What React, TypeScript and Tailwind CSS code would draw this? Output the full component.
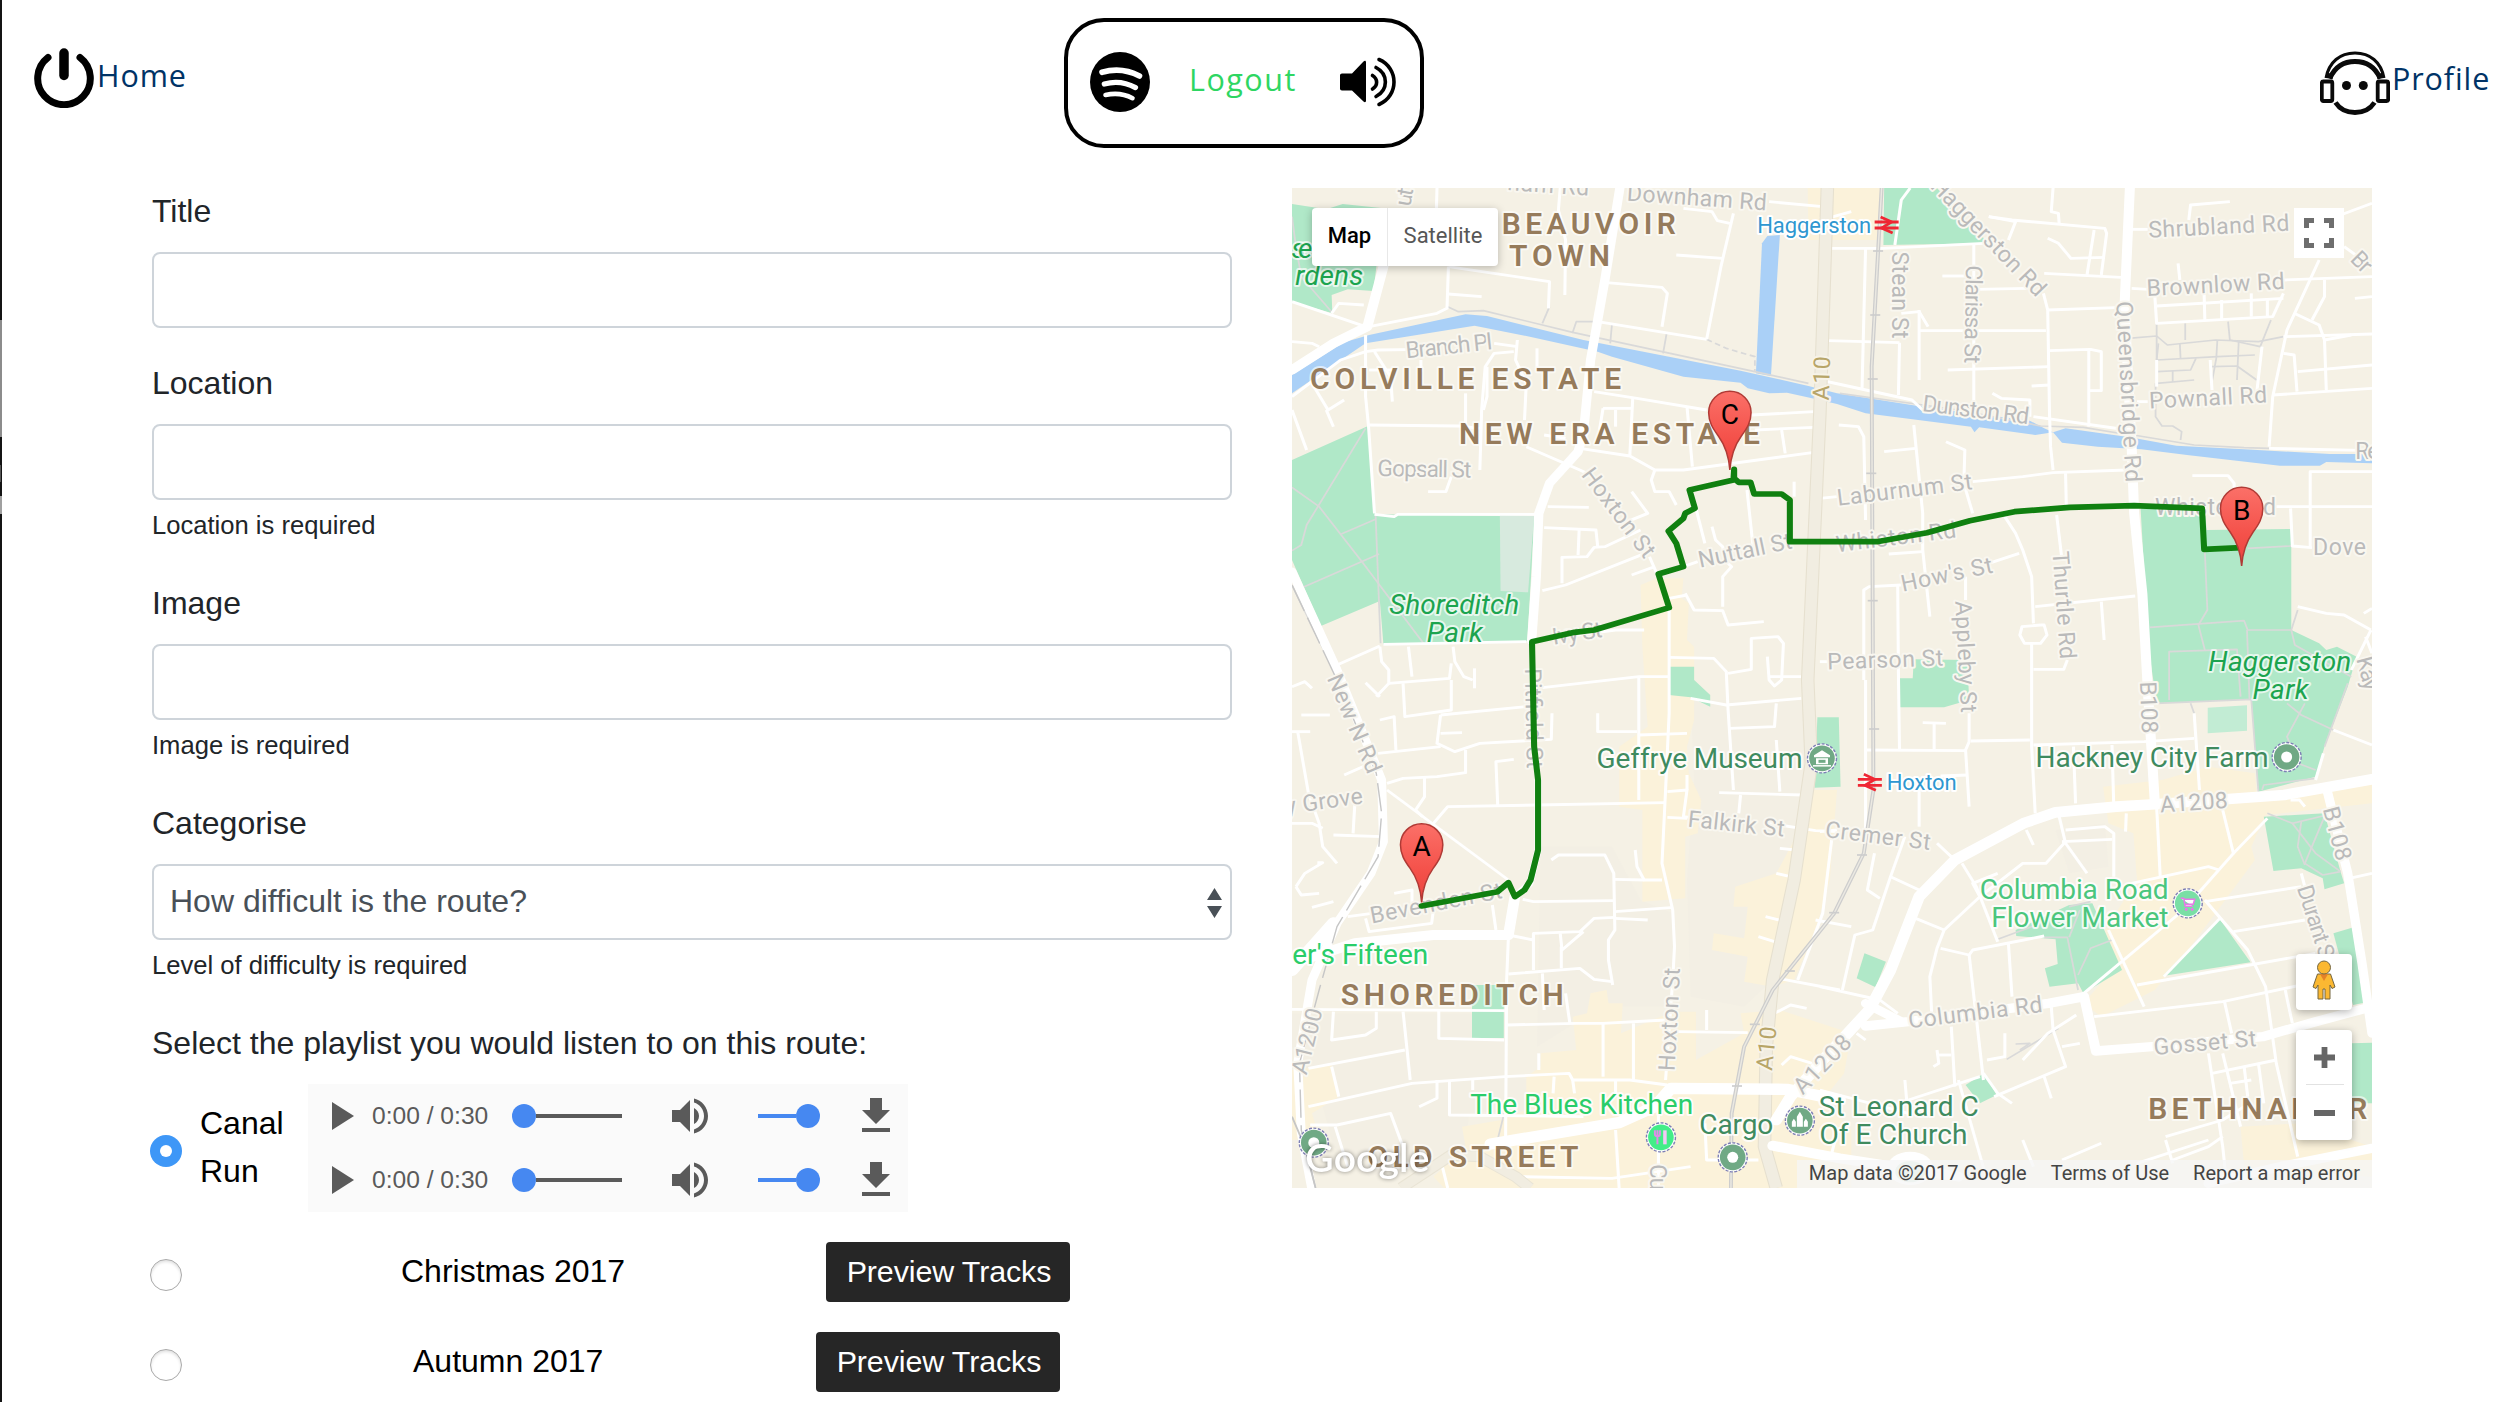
import React from "react";

const HELV = "font-['Liberation_Sans',Arial,sans-serif]";
const WORK = "font-['Open_Sans',sans-serif]";

/* ---------- Header ---------- */

function PowerIcon() {
  return (
    <svg className="h-[60px] w-[60px]" viewBox="0 0 60 60" fill="none" stroke="#000" strokeLinecap="round">
      <path d="M14 9.5A26.3 26.3 0 1 0 46 9.5" strokeWidth="7" />
      <path d="M30 5V27.5" strokeWidth="9.5" />
    </svg>
  );
}

function SpotifyIcon() {
  return (
    <svg className="h-[60px] w-[60px]" viewBox="0 0 60 60">
      <circle cx="30" cy="30" r="30" fill="#000" />
      <g fill="none" stroke="#fff" strokeLinecap="round">
        <path d="M12 20.3C24 16.8 38 18 49.5 24" strokeWidth="5.6" />
        <path d="M14.3 32C25 29 36 30.400 45.500 35.600" strokeWidth="5.200" />
        <path d="M15.500 43C25 40.800 34 41.700 42.500 46.200" strokeWidth="4.600" />
      </g>
    </svg>
  );
}

function SpeakerIcon() {
  return (
    <svg className="h-[50px] w-[57px]" viewBox="0 0 57 50">
      <path d="M2 16.500H12L23.500 4.500C25 3.300 26 3.800 26 5.500V43.500C26 45.200 25 45.700 23.500 44.500L12 33.500H2C.8 33.500 0 32.700 0 31.500V18.500C0 17.300.8 16.500 2 16.500Z" />
      <g fill="none" stroke="#000" strokeWidth="3.600" strokeLinecap="round">
        <path d="M32.500 18.500C38 22 38 28.500 32.500 32" />
        <path d="M36 10.500C48.500 17 48.500 33 36 39.500" />
        <path d="M39 2.500C59 11 59 39 39 47.500" />
      </g>
    </svg>
  );
}

function ProfileIcon() {
  return (
    <svg className="h-[66px] w-[70px]" viewBox="0 0 70 66" fill="none" stroke="#0a0a0a">
      <path d="M6 27C9 11 20 2 35 2S61 11 64 27" strokeWidth="3" />
      <path d="M10 27C15 16 24 10.500 35 10.500S55 16 60 27" strokeWidth="4.800" />
      <path d="M6 24L13 26" strokeWidth="5" />
      <path d="M64 24L57 26" strokeWidth="5" />
      <rect x="1.800" y="30.500" width="10.500" height="19.500" rx="1.500" strokeWidth="3.800" />
      <rect x="57.700" y="30.500" width="10.500" height="19.500" rx="1.500" strokeWidth="3.800" />
      <circle cx="26.500" cy="34.500" r="4.500" fill="#0a0a0a" stroke="none" />
      <circle cx="43.300" cy="34.500" r="4.500" fill="#0a0a0a" stroke="none" />
      <path d="M15.500 51.500C20 58.500 27 61.500 35 61.500S50 58.500 54.500 51.500" strokeWidth="4.800" />
    </svg>
  );
}

function Header() {
  return (
    <header className={`flex h-[188px] items-start text-[30.5px] leading-[40px] ${WORK}`}>
      <a className="flex w-[1064px] pl-[34px] pt-[48px] text-[#003366]">
        <PowerIcon />
        <span className="mt-[7px] ml-[3px] tracking-[0.9px]">Home</span>
      </a>
      <div className="mt-[18px] flex h-[130px] w-[360px] rounded-[40px] border-4 border-black pl-[22px]">
        <div className="mt-[30px]">
          <SpotifyIcon />
        </div>
        <span className="mt-[37px] ml-[39px] w-[108px] tracking-[1.5px] text-[#2ed662]">Logout</span>
        <div className="mt-[35px] ml-[43px]">
          <SpeakerIcon />
        </div>
      </div>
      <a className="flex flex-1 pl-[896px] pt-[51px] text-[#003366]">
        <ProfileIcon />
        <span className="mt-[7px] ml-[2px] tracking-[0.9px]">Profile</span>
      </a>
    </header>
  );
}

/* ---------- Form ---------- */

function Field({ label, help, children }: { label: string; help?: string; children?: React.ReactNode }) {
  return (
    <div className="mb-8">
      <label className="mb-4 block h-12 text-[32px] leading-[46px] text-[#212529]">{label}</label>
      <div className="flex h-[76px] items-center justify-between rounded-[8px] border-2 border-[#ced4da] bg-white pr-[8px] pl-4 text-[32px] text-[#495057]">
        {children}
      </div>
      {help && <small className="mt-[6px] block h-[42px] text-[25.6px] leading-[39px] text-[#212529]">{help}</small>}
    </div>
  );
}

function AudioPlayer() {
  return (
    <div className="flex h-16 w-[600px] items-center bg-[#fafafa] pl-2 text-[24.6px] text-[#5a5a5a]">
      <svg className="h-12 w-12" viewBox="0 0 24 24" fill="#5a5a5a">
        <path d="M8 5v14l11-7z" />
      </svg>
      <span className="ml-2 w-[140px] whitespace-nowrap">0:00 / 0:30</span>
      <div className="flex w-[110px] items-center">
        <span className="h-6 w-6 rounded-full bg-[#4688f1]" />
        <span className="h-1 flex-1 bg-[#5a5a5a]" />
      </div>
      <svg className="ml-11 h-12 w-12" viewBox="0 0 24 24" fill="#5a5a5a">
        <path d="M3 9v6h4l5 5V4L7 9H3zm13.500 3c0-1.770-1.020-3.290-2.500-4.030v8.050c1.480-.730 2.500-2.250 2.500-4.020zM14 3.230v2.060c2.890.860 5 3.540 5 6.710s-2.110 5.850-5 6.710v2.060c4.010-.910 7-4.490 7-8.770s-2.990-7.860-7-8.770z" />
      </svg>
      <div className="ml-11 flex w-[62px] items-center">
        <span className="h-1 flex-1 bg-[#4688f1]" />
        <span className="h-6 w-6 rounded-full bg-[#4688f1]" />
      </div>
      <svg className="ml-8 h-12 w-12" viewBox="0 0 24 24" fill="#5a5a5a">
        <path d="M19 9h-4V3H9v6H5l7 7 7-7zM5 18v2h14v-2H5z" />
      </svg>
    </div>
  );
}

function Radio({ checked }: { checked?: boolean }) {
  return checked ? (
    <span className="flex h-8 w-8 items-center justify-center rounded-full bg-[#3e97f7]">
      <span className="h-3 w-3 rounded-full bg-white" />
    </span>
  ) : (
    <span className="block h-8 w-8 rounded-full border border-[#a9a9a9] bg-white shadow-[inset_0_2px_3px_rgba(0,0,0,0.12)]" />
  );
}

function PreviewButton() {
  return (
    <button className="flex h-[60px] w-[244px] items-center justify-center rounded-[4px] bg-[#262626] pb-[2px] pl-[2px] text-[30.4px] tracking-[-0.1px] text-white">
      Preview Tracks
    </button>
  );
}

function RouteForm() {
  return (
    <form className="w-[1080px]">
      <Field label="Title" />
      <Field label="Location" help="Location is required" />
      <Field label="Image" help="Image is required" />
      <Field label="Categorise" help="Level of difficulty is required">
        <span className="pb-[3px]">How difficult is the route?</span>
        <svg className="mt-[2px] h-[30px] w-[15px]" viewBox="0 0 15 30" fill="#495057">
          <path d="M7.500 0L15 12H0zM0 18H15L7.500 30z" />
        </svg>
      </Field>
      <label className="block h-12 text-[32px] leading-[46px] text-[#212529]">
        Select the playlist you would listen to on this route:
      </label>
      <div className="-ml-[2px] text-[32px] leading-[48px] text-black">
        <div className="mt-4 flex h-32 items-start">
          <div className="mt-[51px] w-[50px]">
            <Radio checked />
          </div>
          <div className="mt-[15px] w-[108px]">
            Canal
            <br />
            Run
          </div>
          <div>
            <AudioPlayer />
            <AudioPlayer />
          </div>
        </div>
        <div className="mt-[30px] flex h-[60px] items-start">
          <div className="mt-[17px] w-[251px]">
            <Radio />
          </div>
          <div className="mt-[5px] w-[425px]">Christmas 2017</div>
          <PreviewButton />
        </div>
        <div className="mt-[30px] flex h-[60px] items-start">
          <div className="mt-[17px] w-[263px]">
            <Radio />
          </div>
          <div className="mt-[5px] w-[403px]">Autumn 2017</div>
          <PreviewButton />
        </div>
      </div>
    </form>
  );
}

/* ---------- Map geometry ---------- */

const LAND_SHADE = [
  "1150,1560 1500,1560 1480,1800 1440,2100 1380,2400 1300,2480 1150,2450 1140,2100 1160,1800",
  "34,2500 630,2500 630,2680 700,2700 690,2790 530,2800 520,2900 250,2990 150,2900 120,2780 34,2600",
  "730,2000 930,2000 1010,2160 1100,2200 1100,2480 900,2480 720,2600",
  "2172,1950 2310,1930 2320,2060 2210,2080",
];

const COMMERCIAL = [
  "1010,1215 1055,1195 1130,1195 1125,1255 1145,1270 1140,1380 1160,1400 1160,1620 1140,1700 1145,1780 1180,1860 1170,1960 1135,1970 1135,2155 1015,2165 1015,1890 950,1880 950,1700 1030,1640 1015,1400",
  "1478,24 1688,24 1680,180 1480,180",
  "1460,1830 1560,1830 1540,2100 1500,2250 1440,2400 1380,2420 1300,2405 1310,2330 1210,2310 1215,2260 1300,2275 1310,2180 1270,2180 1275,2120 1390,2080 1450,1960",
  "870,2440 915,2430 920,2470 960,2470 955,2560 1100,2495 1165,2495 1165,2640 1300,2560 1290,2500 1400,2490 1600,2560 1580,2680 1520,2760 1600,2850 1600,3024 460,3024 430,2990 520,2900 510,2840 620,2820 690,2790 690,2690 730,2660 730,2620 830,2610 820,2510 860,2500",
  "34,2670 145,2655 165,2750 90,2800 110,2870 34,2880",
  "2305,1820 2470,1800 2600,1760 2730,1780 2735,1840 3058,1810 3058,1870 2760,1905 2720,2000 2730,2040 2550,2300 2450,2430 2300,2510 2250,2470 2340,2360 2310,2250 2400,2100 2390,1960 2320,1930",
  "2690,2840 2860,2830 3058,2900 3058,2990 2700,2960",
];

const PARKS = [
  "34,72 130,88 176,72 290,85 262,333 190,328 145,345 147,400 34,365",
  "34,840 247,738 268,1003 616,1008 713,1008 693,1383 290,1393 280,1263 115,1338 34,1140",
  "1692,24 1840,24 1912,110 1985,190 1690,195",
  "2410,985 2590,985 2595,1050 2832,1047 2832,1350 2910,1390 2930,1410 2960,1400 3015,1430 2990,1520 2925,1700 2900,1790 2740,1835 2720,1558 2455,1570 2432,1400",
  "1736,1495 1772,1495 1775,1438 1925,1440 1930,1560 1860,1582 1736,1582",
  "1092,1460 1160,1460 1160,1500 1205,1545 1205,1580 1150,1552 1090,1545",
  "1505,1612 1565,1612 1570,1820 1497,1823",
  "538,2415 627,2415 627,2574 538,2574",
  "1637,2320 1697,2345 1668,2422 1615,2395",
  "1920,2715 1972,2680 2007,2745 1960,2770",
  "2630,2215 2718,2347 2472,2388",
  "2060,2250 2210,2175 2275,2170 2358,2370 2250,2440 2235,2410 2155,2420 2142,2365 2178,2352 2172,2278 2062,2268",
  "2755,1910 2925,1900 2970,2075 2980,2110 2925,2128 2920,2095 2860,2065 2782,2073",
  "2950,2260 3002,2243 3050,2465 3005,2475 2965,2320",
  "3000,2590 3058,2588 3058,2770 2990,2770",
];

const WATER = [
  "34,585 180,487 250,465 520,403 580,408 850,480 1290,572 1480,618 1560,640 1800,680 2100,722 2140,745 2165,757 2200,745 2380,772 2510,797 2700,808 2940,822 3058,822 3058,850 2930,846 2912,857 2800,857 2540,825 2412,808 2290,800 2190,788 2165,757 2115,765 1958,742 1945,757 1935,740 1640,700 1560,672 1490,655 1420,638 1370,640 1310,625 1290,608 1130,590 930,530 890,515 700,470 545,437 240,490 130,570 34,640",
  "1350,190 1365,168 1400,165 1375,588 1333,580",
];

const PATHS = [
  "240,745 75,1035 60,1095 34,1112",
  "34,922 110,980 230,1145 402,1390",
  "172,1062 268,1018",
  "268,1003 282,1390",
  "65,1222 278,1122",
  "34,110 45,200 60,290",
  "60,290 147,398",
  "470,380 500,395 570,392 820,457 830,425 890,425",
  "755,380 735,430",
  "820,457 1330,575 1480,610",
  "930,432 925,490",
  "1083,460 1073,520",
  "1568,640 1900,690 2130,738 2250,742 2380,765",
  "2390,765 2560,795 2700,803 2770,805",
  "2375,475 2455,468 2485,495 2620,480 2740,485 2810,470",
  "2455,430 2455,610 2560,600",
  "2460,490 2455,540 2625,530 2730,525",
  "2535,430 2535,480",
  "2655,425 2660,480 2745,500 2775,420",
  "2520,490 2522,535",
  "2625,480 2622,535 2610,605",
  "2685,480 2680,600",
  "2500,570 2500,605",
  "2455,575 2550,570 2565,535",
  "2610,560 2680,558 2735,600",
  "2452,610 2452,710 2470,738 2500,738 2525,755 2522,780",
  "2590,1115 2597,1290 2572,1335 2590,1410",
  "2436,1342 2700,1322 2710,1350 2832,1350 2850,1290",
  "2708,1350 2715,1560",
  "2832,1350 2842,1395 3000,1490",
  "2490,1560 2490,1415 2680,1408 2690,1550",
  "2455,1570 2720,1558 2740,1835",
  "2710,1105 2832,1098",
  "2990,1510 2925,1700",
  "2870,1570 2820,1670 2850,1750 2900,1770",
  "2820,1570 2860,1605 2950,1650",
  "2550,1570 2560,1600",
  "2750,1830 2755,1815 2900,1795",
  "2210,2180 2270,2165",
  "2012,2277 2130,2230",
  "2140,2272 2205,2272 2235,2430",
  "2210,2272 2240,2190",
  "2235,2385 2270,2305 2330,2280",
  "2765,1900 2835,1930 2900,2020 2970,2075",
  "2835,1930 2920,1908",
  "2860,1925 2850,2000 2870,2055",
  "2925,1910 2870,2050 2920,2085 2970,2075",
  "2035,2638 2180,2545",
  "2060,2592 2100,2590 2072,2610",
  "628,2800 605,2900",
  "34,1215 155,1480",
];

const MINOR = [
  "440,24 438,100",
  "785,24 780,90 800,180 798,345",
  "472,260 755,305 752,385",
  "472,260 468,385 440,400 250,440",
  "472,342 565,350",
  "1270,100 1235,260 1195,478",
  "1110,225 1240,235",
  "1130,85 1210,95 1225,122 1260,130",
  "915,308 1070,322 1085,340 1070,440",
  "890,425 1195,478",
  "1370,65 1520,80",
  "34,485 90,490 110,500",
  "34,365 240,440",
  "145,400 165,370 235,375",
  "34,650 170,540 240,515 275,510 400,508",
  "240,465 240,650 248,735 265,1000",
  "265,515 310,590 315,665",
  "34,690 75,810",
  "90,610 135,690 180,660",
  "130,690 150,740",
  "248,735 500,738 560,745",
  "250,570 320,570",
  "560,870 565,690 575,560 600,520 655,515",
  "570,690 580,650 580,560",
  "665,480 660,540 690,610 685,720",
  "600,490 665,500",
  "720,505 720,560",
  "880,635 1000,655 1195,690",
  "520,640 520,730",
  "395,540 395,575",
  "740,765 800,775",
  "1140,680 1155,860",
  "905,685 895,750",
  "905,685 985,685",
  "940,690 940,740",
  "988,655 980,825",
  "840,805 980,828 1050,870 1130,870 1490,818",
  "1050,870 1040,900 1050,935 1090,935 1110,975",
  "690,800 840,870 880,890",
  "1320,705 1495,695",
  "1330,750 1495,742",
  "1405,750 1415,820",
  "265,1003 320,1010 330,1003 715,1003",
  "415,935 465,935 480,890",
  "750,980 865,982",
  "740,1043 885,1050 890,1100",
  "838,1050 835,1125",
  "735,1232 800,1215 1035,1115",
  "790,1210 790,1132 860,1130 880,1102 910,1100 1010,1050",
  "985,935 1030,1000 960,1030",
  "1035,1130 1055,1180",
  "985,1185 1050,1160",
  "1165,985 1190,1090",
  "1210,1040 1220,1080 1240,1100 1245,1140 1265,1160 1240,1190 1240,1280",
  "1308,930 1325,1100",
  "1130,1160 1170,1145",
  "1090,1255 1140,1245",
  "1135,1240 1160,1290 1240,1292 1255,1335 1355,1325",
  "1060,1195 1090,1283 1090,1600 1080,1830 1070,2050 1100,2190 1105,2300 1100,2400 1080,2700",
  "1090,1432 1215,1435 1250,1475 1255,1590 1270,1830",
  "1255,1480 1320,1468 1320,1375 1395,1370 1410,1390 1405,1500 1385,1518 1370,1500 1365,1430",
  "1370,1490 1460,1490",
  "1440,905 1440,950",
  "706,1383 940,1350 1020,1350",
  "735,1523 1005,1490 1090,1490",
  "1005,1490 1005,1860",
  "290,1393 690,1385",
  "160,1455 280,1398",
  "34,1520 70,1505 90,1525",
  "280,1400 285,1445 305,1470 305,1510 270,1550",
  "360,1400 370,1490",
  "485,1400 490,1445 515,1490 540,1500",
  "240,1508 280,1550",
  "305,1510 475,1495 480,1450",
  "545,1465 545,1525",
  "345,1510 350,1610 480,1590 480,1500",
  "280,1620 320,1610 325,1710",
  "450,1605 690,1580",
  "450,1605 440,1690 490,1715 560,1690 760,1678 762,1600",
  "275,1720 450,1700",
  "450,1660 510,1658",
  "60,1605 140,1605",
  "34,1655 85,1655",
  "50,1655 80,1840 110,1930 120,2000 160,2050",
  "180,1785 275,1740",
  "300,1810 345,1795 440,1790 520,1778 520,1710",
  "300,1830 640,2100",
  "405,1790 405,1850 380,1890 400,1910",
  "430,1930 470,1880 1080,1868",
  "610,1875 605,1745 655,1738",
  "205,1960 210,1870",
  "150,1965 285,1970",
  "34,1930 90,1930 120,1945",
  "45,2120 70,2080 120,2048 105,2048",
  "90,2182 150,2165",
  "45,2120 60,2145 110,2140",
  "190,2210 400,2180",
  "240,2215 250,2255 425,2230 430,2190",
  "320,2140 370,2130 370,2170",
  "640,2270 635,2400 632,2900",
  "595,2175 605,2250",
  "680,2158 710,2165 935,2162",
  "760,2040 780,2025 910,2025 935,2080 938,2250 920,2280 920,2340 932,2415",
  "995,2010 1000,2060 1020,2100 1070,2100",
  "938,2098 1020,2100",
  "938,2195 1095,2183",
  "938,2215 1030,2220",
  "640,2265 710,2280 710,2260 840,2255 880,2215 938,2212",
  "710,2270 710,2370",
  "785,2260 790,2310 850,2255",
  "788,2300 788,2365",
  "640,2382 840,2365 880,2398 930,2405",
  "735,2380 740,2490",
  "800,2440 812,2530",
  "34,2488 630,2492",
  "445,2492 445,2575 628,2580",
  "150,2495 145,2580 240,2565 270,2545 270,2495",
  "345,2495 365,2700",
  "80,2665 350,2610",
  "145,2660 165,2750",
  "80,2780 370,2710 630,2690 810,2680 820,2700 980,2700 1085,2715",
  "475,2700 475,2805 850,2810",
  "440,2700 440,2755 390,2780",
  "540,2700 540,2730",
  "768,2690 765,2740",
  "820,2700 825,2740",
  "85,2835 160,2835 310,2800 350,2915",
  "155,2840 190,2960",
  "635,2535 830,2530 905,2530 1080,2520",
  "905,2530 905,2690",
  "990,2530 990,2700",
  "1110,2555 1310,2558",
  "1195,2490 1195,2550",
  "725,2620 725,2670",
  "940,2700 940,2740",
  "940,2850 950,3024",
  "1060,2780 1060,3024",
  "1190,2830 1195,2940 1340,2940",
  "455,2960 470,3024",
  "675,2990 930,2995 1150,2960",
  "890,1600 890,1655 1000,1655",
  "1005,1665 1140,1660",
  "1085,1835 1140,1830 1130,1910 1170,1915",
  "1140,1785 1140,1830",
  "1085,1912 1140,1915",
  "1150,1555 1250,1575 1460,1555",
  "1390,1570 1385,1640 1260,1645",
  "1390,1680 1400,1835",
  "1230,1838 1465,1845",
  "1290,1845 1285,1900",
  "1370,1930 1500,1952 1560,1955",
  "1400,2005 1445,2010",
  "1390,2080 1430,2090",
  "1360,2210 1405,2222",
  "1340,2270 1385,2285",
  "1545,1980 1520,2200 1450,2400",
  "1395,2395 1568,2430",
  "1385,2500 1430,2475 1475,2485",
  "1405,2655 1430,2630 1490,2650",
  "1500,2220 1600,2240",
  "1510,205 1690,205 1970,190",
  "1600,95 1550,110 1512,115",
  "1640,205 1630,630",
  "1535,482 1735,488",
  "1765,24 1740,60 1722,195",
  "1735,488 1732,645",
  "1512,600 1770,660 1800,690",
  "1790,390 1790,600",
  "1740,400 1790,395 1815,440",
  "1790,452 2145,452",
  "1943,195 1943,665",
  "1855,288 1930,288",
  "1950,328 2090,325",
  "1985,110 2050,120 2310,145 2315,160 2300,285",
  "1985,110 2060,125 2040,180",
  "2165,24 2160,95 2180,100 2182,130",
  "2150,175 2180,190 2215,235 2310,232",
  "2280,150 2260,285",
  "2140,280 2355,292",
  "2138,340 2150,390 2155,700 2158,800 2165,870",
  "2150,390 2340,383",
  "2155,512 2270,508 2300,515 2300,632 2265,632",
  "2265,510 2265,740",
  "1870,570 2155,560",
  "2105,618 2155,615",
  "1995,640 2020,655 2100,660 2100,710",
  "2110,710 2375,750",
  "2385,148 2430,148",
  "2545,120 2550,75 2660,65",
  "2515,250 2520,300",
  "2385,325 2430,328",
  "2450,350 2455,430 2780,410 2810,340",
  "2455,378 2810,355",
  "2588,345 2590,420",
  "2637,360 2637,420",
  "2720,340 2720,410",
  "2765,360 2765,410",
  "2605,540 2610,630",
  "2455,540 2455,620",
  "2750,500 2735,640",
  "2970,105 3058,70",
  "2910,240 2820,450 2780,650 2770,800",
  "2980,200 3058,260",
  "2810,300 3058,290",
  "2925,300 2925,350 2890,420",
  "2840,400 2910,435 2925,480 2930,630",
  "2810,470 3058,462",
  "2925,480 3000,465",
  "2810,520 2840,525 2848,635",
  "2850,575 3058,555",
  "2780,645 3058,625",
  "2400,665 2430,665",
  "2770,805 3058,812",
  "3010,355 3058,350",
  "1512,955 1560,950",
  "1940,905 2080,890 2165,878 2370,870",
  "2200,880 2202,975",
  "1565,735 1620,740 1635,770 1640,1020",
  "1692,815 1780,805",
  "1775,735 1800,1000 1800,1110 1820,1310",
  "1865,785 1918,810 1915,910 1940,1000",
  "1705,1122 1800,1115",
  "2030,1010 2060,1060 2080,1110 2105,1190 2110,1330",
  "1985,1150 2070,1120",
  "1635,1500 1635,1230 1650,1220 1740,1215",
  "1730,1215 1732,1480 1735,1710",
  "1920,1190 1920,1260",
  "2115,1280 2395,1248",
  "2300,1265 2308,1380",
  "2130,1335 2078,1340 2072,1365 2085,1390 2130,1390 2148,1365 2140,1335 2130,1335",
  "2105,1390 2105,1700 2115,1900",
  "2175,1005 2190,1140",
  "2110,1468 2195,1468 2205,1440",
  "2555,887 2655,887 2672,910 2672,960",
  "2790,980 3058,980",
  "2885,1100 2885,875 3058,875",
  "2830,985 2835,1098 2890,1103",
  "2850,1280 2930,1300 2980,1305 3055,1350",
  "3055,1350 3000,1470",
  "3035,1300 3058,1285",
  "3040,1370 3058,1420",
  "1512,1445 1535,1445",
  "1640,1500 1640,1960",
  "1640,1710 1920,1712",
  "1930,1600 1930,1685 1920,1710 1930,1880",
  "1935,1683 2100,1680",
  "1800,1628 1865,1630",
  "1832,1630 1832,1710",
  "1850,1788 1925,1785",
  "1790,1830 1790,1940",
  "2110,1695 2420,1685 2560,1675",
  "2222,1700 2228,1870",
  "2330,1695 2335,1880",
  "2560,1600 2575,1830",
  "2870,1880 2855,1860 2830,1860",
  "2922,1720 2900,1800",
  "2950,1650 3058,1695",
  "1512,1955 1560,1950",
  "1750,1970 1710,2090 1660,2250 1610,2265 1575,2430",
  "1710,2090 1790,2130",
  "1665,2020 1645,2130 1680,2155",
  "1840,1990 1890,2040",
  "1910,2050 1950,2120 2010,2285",
  "2090,1950 2110,1995",
  "2180,1900 2200,1990 2260,2080",
  "2200,1950 2310,1940 2335,1960 2335,2090",
  "2190,1985 2330,1978",
  "2200,1985 2145,2050 2080,2050 1960,2150 1940,2110 2010,2080",
  "1960,2150 1860,2250 1840,2305 1820,2390 1825,2500",
  "1780,2215 1860,2250",
  "1850,2305 1930,2325 1940,2310 2140,2268",
  "1930,2325 1970,2700",
  "2040,2290 2050,2450",
  "2455,1880 2465,2090",
  "2370,1900 2368,1955",
  "2640,1890 2670,2020 2765,1915",
  "2385,2110 2600,2060 2630,2070",
  "2670,2020 2530,2190 2240,2450",
  "2320,2250 2420,2480",
  "2590,2160 2710,2310 2760,2420 2790,2650 2850,2930",
  "2590,2165 2860,2120",
  "2670,2255 2870,2220",
  "2860,2080 2870,2120",
  "2632,2215 2475,2390",
  "2400,2415 2900,2320",
  "2280,2510 2640,2465 2860,2415",
  "2645,2465 2665,2560",
  "2815,2430 2835,2530",
  "1512,2420 1680,2460 1730,2500",
  "1615,2560 1640,2580",
  "1880,2540 1890,2720",
  "2160,2480 2165,2550 2200,2660 2000,2750",
  "2030,2560 2030,2630 1980,2640",
  "1840,2610 1845,2650 1830,2660",
  "1840,2625 1880,2625",
  "2190,2600 2240,2590",
  "2140,2690 2160,2755",
  "2230,2505 2150,2560 2080,2640",
  "1512,2730 1760,2800",
  "1970,2680 2010,2740 2050,2770",
  "1760,2760 1960,2690",
  "1750,2700 1755,2760",
  "1900,2700 1980,3000",
  "2300,2890 2190,2940",
  "2080,2880 2110,2960",
  "2480,2880 2500,2950",
  "2480,2870 2640,2820 2700,2780",
  "2500,2940 2600,2900 2640,2870",
  "2600,2620 2640,2900 2650,3000",
  "2610,2680 2790,2640",
  "2640,2620 2690,2840",
  "2660,2710 2720,2700",
  "2700,2660 2710,2750",
  "2740,2650 2755,2770",
  "2400,2950 2600,2880",
  "1545,2920 1560,2860",
  "2995,2095 3058,2080",
];

const MAJOR: { d: string; w: number }[] = [
  { d: "952,24 910,300 870,540 850,760 835,815 755,910 725,1000 718,1190 705,1383", w: 26 },
  { d: "318,100 290,260 245,440 150,490 34,570", w: 28 },
  { d: "34,1175 160,1470 285,1800 290,1985 255,2080 160,2230 90,2400 50,2650 60,2860 90,3030", w: 25 },
  { d: "150,2230 34,2370", w: 36 },
  { d: "2380,24 2365,380 2385,800 2392,1000 2415,1240 2432,1560 2450,1870", w: 28 },
  { d: "3058,1798 2812,1845 2462,1872 2342,1880 2172,1897 2082,1930 1890,2040 1790,2150 1710,2370 1650,2490 1512,2650 1430,2750 1390,2820", w: 32 },
  { d: "590,2892 950,2828 1050,2780 1095,2725 1420,2728 1568,2760", w: 34 },
  { d: "1380,2897 1568,2935 1900,2990", w: 30 },
  { d: "658,2150 640,2265 430,2265 210,2290 34,2350", w: 30 },
  { d: "1640,2538 1760,2525 2152,2470 2252,2450 2285,2613 2442,2600 2752,2570 2900,2525 3058,2480", w: 28 },
  { d: "1640,2470 1740,2525", w: 26 },
  { d: "2932,1830 2990,2080 3030,2350 3058,2560", w: 26 },
  { d: "3058,2905 2800,2960 2600,3010", w: 28 },
  { d: "723,1800 723,2010 700,2110 658,2150", w: 20 },
];

const ROUTE =
  "397,2178 610,2135 640,2108 658,2150 685,2130 702,2100 723,2010 723,1800 712,1700 706,1385 825,1357 880,1350 1090,1283 1060,1182 1130,1160 1110,1090 1088,1053 1130,1015 1135,1000 1162,985 1147,930 1270,900 1272,868 1272,895 1285,907 1318,907 1328,942 1405,942 1428,960 1428,1085 1672,1085 1812,1058 1932,1022 2057,995 2212,982 2392,977 2582,985 2588,1108 2692,1103";

const RAIL = "1685,24 1657,560 1662,1830 1635,2020 1552,2200 1380,2430 1300,2600 1265,2800 1263,3024";
const TIES = [
  [1675, 213],
  [1667, 405],
  [1660, 597],
  [1656, 880],
  [1660, 1262],
  [1664, 1647],
  [1630, 2025],
  [1552, 2198],
  [1428, 2373],
  [1330, 2533],
  [1280, 2718],
];

/* ---------- Map labels ---------- */

type Kind = "area" | "road" | "highway" | "poi" | "food" | "shop" | "park" | "station";
type Label = [text: string, x: number, y: number, width: number, rotate: number, kind: Kind];

const LABELS: Label[] = [
  ["ham Rd", 752, 14, 82, 4, "road"],
  ["Downham Rd", 1168, 52, 140, 4, "road"],
  ["ut", 347, 50, 18, -80, "road"],
  ["Branch Pl", 473, 497, 87, -6, "road"],
  ["Gopsall St", 405, 866, 94, 1, "road"],
  ["Hoxton St", 950, 997, 106, 53, "road"],
  ["Nuttall St", 1302, 1110, 95, -12, "road"],
  ["Ivy St", 832, 1358, 50, -9, "road"],
  ["Pitfield St", 712, 1615, 100, 89, "road"],
  ["New N Rd", 210, 1630, 105, 67, "road"],
  ["y Grove", 123, 1862, 78, -8, "road"],
  ["Bevenden St", 437, 2168, 134, -11, "road"],
  ["A1200", 75, 2583, 67, -76, "road"],
  ["Hoxton St", 1090, 2518, 103, -87, "road"],
  ["A10", 1516, 595, 44, -88, "highway"],
  ["A10", 1362, 2605, 44, -84, "highway"],
  ["Falkirk St", 1278, 1930, 97, 6, "road"],
  ["Cremer St", 1675, 1966, 106, 7, "road"],
  ["A1208", 1518, 2652, 72, -46, "road"],
  ["Cu", 1060, 2992, 26, 90, "road"],
  ["Stean St", 1737, 345, 87, 90, "road"],
  ["Clarissa St", 1942, 403, 98, 91, "road"],
  ["Haggerston Rd", 1985, 170, 154, 46, "road"],
  ["Queensbridge Rd", 2378, 635, 181, 87, "road"],
  ["Shrubland Rd", 2629, 138, 141, -3, "road"],
  ["Brownlow Rd", 2620, 313, 138, -3, "road"],
  ["Pownall Rd", 2599, 652, 118, -3, "road"],
  ["Br", 3030, 245, 20, 45, "road"],
  ["Re", 3045, 812, 24, 0, "road"],
  ["Dunston Rd", 1949, 688, 107, 7, "road"],
  ["Laburnum St", 1749, 928, 136, -7, "road"],
  ["Whiston Rd", 1725, 1070, 121, -7, "road"],
  ["Whiston Rd", 2620, 980, 121, 0, "road"],
  ["How's St", 1867, 1182, 93, -12, "road"],
  ["Thurtle Rd", 2197, 1275, 108, 86, "road"],
  ["Appleby St", 1922, 1430, 112, 87, "road"],
  ["Pearson St", 1695, 1438, 116, -2, "road"],
  ["Dove", 2967, 1100, 53, 0, "road"],
  ["B108", 2434, 1582, 52, 88, "road"],
  ["Kay", 3048, 1480, 34, 75, "road"],
  ["A1208", 2559, 1866, 68, -4, "road"],
  ["B108", 2962, 1960, 55, 75, "road"],
  ["Durant S", 2902, 2225, 76, 72, "road"],
  ["Columbia Rd", 1947, 2496, 135, -7, "road"],
  ["Gosset St", 2590, 2587, 103, -5, "road"],
  ["BEAUVOIR", 865, 131, 174, 0, "area"],
  ["TOWN", 783, 226, 101, 0, "area"],
  ["COLVILLE ESTATE", 520, 596, 311, 0, "area"],
  ["NEW ERA ESTATE", 923, 760, 301, 0, "area"],
  ["SHOREDITCH", 483, 2443, 223, 0, "area"],
  ["OLD STREET", 541, 2930, 211, 0, "area"],
  ["BETHNAL GR", 2738, 2785, 219, 0, "area"],
  ["Haggerston", 1496, 135, 114, 0, "station"],
  ["Hoxton", 1797, 1807, 70, 0, "station"],
  ["se", 62, 203, 21, 0, "park"],
  ["rdens", 138, 286, 68, 0, "park"],
  ["Shoreditch", 488, 1272, 130, 0, "park"],
  ["Park", 490, 1357, 56, 0, "park"],
  ["Haggerston", 2800, 1443, 143, 0, "park"],
  ["Park", 2802, 1528, 56, 0, "park"],
  ["Geffrye Museum", 1175, 1735, 206, 0, "poi"],
  ["Hackney City Farm", 2442, 1732, 233, 0, "poi"],
  ["Columbia Road", 2224, 2128, 189, 0, "shop"],
  ["Flower Market", 2240, 2212, 177, 0, "shop"],
  ["er's Fifteen", 225, 2323, 136, 0, "food"],
  ["The Blues Kitchen", 845, 2772, 223, 0, "food"],
  ["Cargo", 1278, 2833, 74, 0, "poi"],
  ["St Leonard C", 1733, 2778, 160, 0, "poi"],
  ["Of E Church", 1718, 2861, 148, 0, "poi"],
];

const KIND_CLASS: Record<Kind, string> = {
  area: "fill-[#967b5b] text-[30px] font-semibold stroke-white/60",
  road: "fill-[#bababa] text-[23px] stroke-[#f9f7f0]",
  highway: "fill-[#b7a568] text-[23px] stroke-[#f7f3e8]",
  poi: "fill-[#3f8b5f] text-[28px] stroke-white/80",
  food: "fill-[#2acd6a] text-[28px] stroke-white/80",
  shop: "fill-[#4bc67d] text-[28px] stroke-white/80",
  park: "fill-[#1ca44f] text-[28px] italic stroke-white/70",
  station: "fill-[#2f97d0] text-[22px] stroke-white",
};

const px = (x: number) => (x - 34) / 2.8;
const py = (y: number) => (y - 24) / 3;

function MapLabels() {
  return (
    <g className="font-[Roboto,sans-serif]" strokeWidth="4" strokeLinejoin="round" textAnchor="middle">
      {LABELS.map(([text, x, y, width, rotate, kind], i) => (
        <text
          key={i}
          className={`${KIND_CLASS[kind]} [paint-order:stroke]`}
          transform={`translate(${px(x)} ${py(y)}) rotate(${rotate})`}
          dy="0.355em"
          textLength={width}
        >
          {text}
        </text>
      ))}
    </g>
  );
}

function Badge({ x, y, fill, children }: { x: number; y: number; fill: string; children: React.ReactNode }) {
  return (
    <g transform={`translate(${px(x)} ${py(y)})`}>
      <circle r="14.500" fill="#fff" stroke="#7d7fb5" strokeWidth="1.400" strokeDasharray="3 1.500" />
      <circle r="12.800" fill={fill} />
      {children}
    </g>
  );
}

function RailSign({ x, y }: { x: number; y: number }) {
  return (
    <g transform={`translate(${px(x)} ${py(y)})`} fill="none" stroke="#ef2733" strokeWidth="2.800">
      <path d="M-12 -3H12M-12 3H12" />
      <path d="M-6 -8L5 -3L-5 3L6 8" />
    </g>
  );
}

function Marker({ x, y, letter }: { x: number; y: number; letter: string }) {
  return (
    <g transform={`translate(${px(x) - 22} ${py(y) - 80})`}>
      <path
        d="M22 80C21 66 17 55 10.500 46C5 38.500 .8 32 .8 22.500A21.200 21.200 0 0 1 43.200 22.500C43.200 32 39 38.500 33.500 46C27 55 23 66 22 80Z"
        fill="url(#pin)"
        stroke="#b03a35"
        strokeWidth="1.500"
      />
      <text x="22" y="34" textAnchor="middle" className="fill-black font-[Roboto,sans-serif] text-[28px]">
        {letter}
      </text>
    </g>
  );
}

function MapCanvas() {
  return (
    <>
      <svg className="absolute inset-0 h-full w-full" viewBox="34 24 3024 3000" preserveAspectRatio="none" fill="none" strokeLinejoin="round">
        <rect x="34" y="24" width="3024" height="3000" fill="#f5f1e5" />
        {LAND_SHADE.map((p) => (
          <polygon key={p} points={p} fill="#f3efe4" />
        ))}
        {COMMERCIAL.map((p) => (
          <polygon key={p} points={p} fill="#fbf2da" />
        ))}
        {PARKS.map((p) => (
          <polygon key={p} points={p} fill="#b0e8c8" />
        ))}
        <polygon points="616,1005 712,1008 695,1237 618,1233" fill="#d7eade" />
        <polygon points="2598,1583 2708,1576 2708,1652 2598,1660" fill="#c2ecd4" />
        {WATER.map((p) => (
          <polygon key={p} points={p} fill="#aad0f7" />
        ))}
        <g stroke="#d9d9d9" strokeWidth="5">
          {PATHS.map((p) => (
            <polyline key={p} points={p} />
          ))}
          <polyline points="1195,478 1250,505 1330,530 1330,575" strokeDasharray="16 10" />
        </g>
        <g stroke="#fff" strokeWidth="8.500">
          {MINOR.map((p) => (
            <polyline key={p} points={p} />
          ))}
        </g>
        <polyline points="340,3024 480,2925 560,2930 660,2990 700,3024" stroke="#e9e4d5" strokeWidth="34" />
        <polyline points="340,3024 480,2925 560,2930 660,2990 700,3024" stroke="#f1ede1" strokeWidth="28" />
        <polyline points="1533,24 1512,700 1478,1500 1488,1750 1440,2100 1380,2400 1362,2600 1357,2900 1390,3024" stroke="#e6e0cf" strokeWidth="38" />
        <polyline points="1533,24 1512,700 1478,1500 1488,1750 1440,2100 1380,2400 1362,2600 1357,2900 1390,3024" stroke="#f1ede1" strokeWidth="32" />
        {MAJOR.map((r) => (
          <polyline key={r.d} points={r.d} stroke="#fff" strokeWidth={r.w} strokeLinecap="round" />
        ))}
        <ellipse cx="1765" cy="2965" rx="65" ry="50" fill="#fff" />
        <ellipse cx="1765" cy="2975" rx="42" ry="32" fill="#d5ecdf" />
        <polyline points={RAIL} stroke="#cdcdcd" strokeWidth="11" />
        <polyline points={RAIL} stroke="#ebe9e2" strokeWidth="4" />
        {TIES.map(([x, y]) => (
          <path key={y} d={`M${x - 14} ${y}h28`} stroke="#cdcdcd" strokeWidth="5" />
        ))}
        <polyline
          points="34,1215 160,1500 270,1780 285,1900 275,2030 160,2240 110,2430 55,2650 60,2850 100,3024"
          stroke="#c6c6c6"
          strokeWidth="4"
          strokeDasharray="85 22"
        />
        <polyline points="34,2810 70,2900 100,3024" stroke="#c6c6c6" strokeWidth="5" />
      </svg>
      <svg className="absolute inset-0 h-full w-full" viewBox="0 0 1080 1000">
        <defs>
          <linearGradient id="pin" x1="0" y1="0" x2="0" y2="1">
            <stop offset="0" stopColor="#fb7068" />
            <stop offset="0.6" stopColor="#f4514a" />
            <stop offset="1" stopColor="#e9433e" />
          </linearGradient>
        </defs>
        <MapLabels />
        <RailSign x={1699} y={135} />
        <RailSign x={1652} y={1807} />
        <Badge x={1518} y={1735} fill="#70a985">
          <path d="M0 -8L8 -3V-1H-8V-3ZM-6 0H6V6H-6Z" fill="#fff" />
          <path d="M-3.500 1.500H3.500V4.500H-3.500Z" fill="#70a985" />
          <path d="M-9 7.500H9" stroke="#fff" strokeWidth="1.500" />
        </Badge>
        <Badge x={2819} y={1731} fill="#70a985">
          <circle r="5.500" fill="#fff" />
        </Badge>
        <Badge x={2542} y={2170} fill="#7adfa5">
          <path d="M-7 -5H-4L-2.500 3H5M-3.500 -4H7L5.500 1H-3" fill="#fff" stroke="#e879e8" strokeWidth="1.500" />
          <circle cx="-1.500" cy="6" r="1.500" fill="#e879e8" />
          <circle cx="4.500" cy="6" r="1.500" fill="#e879e8" />
        </Badge>
        <Badge x={1067} y={2872} fill="#43ed88">
          <path d="M-6 -7V-3Q-6 -1 -3.500 -1Q-1 -1 -1 -3V-7M-3.500 -7V7" fill="none" stroke="#e08be8" strokeWidth="2" />
          <path d="M4 -7V7" stroke="#f3c8f7" strokeWidth="3.500" />
        </Badge>
        <Badge x={1268} y={2932} fill="#70a985">
          <circle r="5.500" fill="#fff" />
        </Badge>
        <Badge x={1456} y={2822} fill="#70a985">
          <path d="M-8 6V1L-6 -2L-4 1V6ZM-3 6V-4L0 -9L3 -4V6ZM4 6V1L6 -2L8 1V6Z" fill="#fff" />
        </Badge>
        <Badge x={95} y={2888} fill="#70a985">
          <circle r="5.500" fill="#fff" />
        </Badge>
        <text
          x={px(245)}
          y={py(2976)}
          textAnchor="middle"
          textLength="124"
          className="fill-white font-[Lato,sans-serif] text-[39px] font-semibold [filter:drop-shadow(0_0_2px_rgba(0,0,0,0.45))]"
        >
          Google
        </text>
      </svg>
      <svg className="absolute inset-0 h-full w-full" viewBox="34 24 3024 3000" preserveAspectRatio="none" fill="none">
        <polyline points={ROUTE} stroke="#108010" strokeWidth="17" strokeLinejoin="round" strokeLinecap="round" />
      </svg>
      <svg className="absolute inset-0 h-full w-full" viewBox="0 0 1080 1000">
        <Marker x={397} y={2167} letter="A" />
        <Marker x={2693} y={1158} letter="B" />
        <Marker x={1260} y={870} letter="C" />
      </svg>
    </>
  );
}

function MapControls() {
  return (
    <>
      <div className="absolute top-5 left-5 flex h-[58px] rounded-[4px] bg-white text-[22px] leading-[56px] text-[#565656] shadow-[0_2px_8px_rgba(0,0,0,0.25)]">
        <span className="w-[76px] border-r border-[#e8e8e8] text-center font-medium text-black">Map</span>
        <span className="w-[110px] text-center">Satellite</span>
      </div>
      <div className="absolute top-5 left-[1002px] flex h-[50px] w-[50px] items-center justify-center bg-white">
        <svg className="h-[30px] w-[30px]" viewBox="0 0 30 30" fill="none" stroke="#6e6e6e" strokeWidth="5">
          <path d="M10 2.500H2.500V10M20 2.500H27.500V10M10 27.500H2.500V20M20 27.500H27.500V20" />
        </svg>
      </div>
      <div className="absolute top-[766px] left-[1004px] flex h-14 w-14 items-center justify-center rounded-[4px] bg-white shadow-[0_2px_8px_rgba(0,0,0,0.3)]">
        <svg className="-mt-1 h-[40px] w-[24px]" viewBox="0 0 24 40" fill="#fbb832" stroke="#74663f" strokeWidth="1">
          <path d="M5.500 14L1 27L4 28.500L6 25V39H11V29H13V39H18V25L20 28.500L23 27L18.500 14Z" />
          <path d="M8 14L12 21L16 14Z" fill="#e58127" stroke="none" />
          <circle cx="12" cy="7.500" r="6.500" />
        </svg>
      </div>
      <div className="absolute top-[842px] left-[1004px] flex h-[110px] w-14 flex-col items-center rounded-[4px] bg-white pl-[1px] shadow-[0_2px_8px_rgba(0,0,0,0.3)]">
        <svg className="mt-[17px] h-[21px] w-[21px]" viewBox="0 0 20 20" stroke="#666" strokeWidth="5.500">
          <path d="M0 10H20M10 0V20" />
        </svg>
        <span className="mt-[16px] h-px w-[38px] bg-[#e2e2e2]" />
        <span className="mt-[25px] h-[6px] w-[21px] bg-[#666]" />
      </div>
      <div className="absolute right-0 bottom-0 flex h-7 gap-6 bg-[#f5f5f5]/75 pr-[12px] pl-3 text-[20px] leading-[26px] whitespace-nowrap text-[#444]">
        <span>Map data ©2017 Google</span>
        <span>Terms of Use</span>
        <span>Report a map error</span>
      </div>
    </>
  );
}

export default function App() {
  return (
    <div className={`flex h-[1402px] w-[2518px] overflow-hidden bg-white ${HELV}`}>
      <div className="flex w-[2px] shrink-0 flex-col bg-[#141414]">
        <span className="mt-[320px] h-[117px] bg-[#8c8c8c]" />
        <span className="mt-[28px] h-[17px] w-px bg-[#555]" />
        <span className="mt-[14px] h-[18px] bg-[#a0a0a0]" />
      </div>
      <div className="w-[2516px] shrink-0">
        <div className="-ml-[2px] w-[2518px] pl-0">
          <div className="ml-[2px] w-[2516px]">
            <div className="-ml-[2px]">
              <Header />
            </div>
          </div>
        </div>
        <main className="flex gap-[60px] pl-[150px]">
          <RouteForm />
          <section className="relative h-[1000px] w-[1080px] shrink-0 overflow-hidden font-[Roboto,sans-serif]">
            <MapCanvas />
            <MapControls />
          </section>
        </main>
      </div>
    </div>
  );
}
